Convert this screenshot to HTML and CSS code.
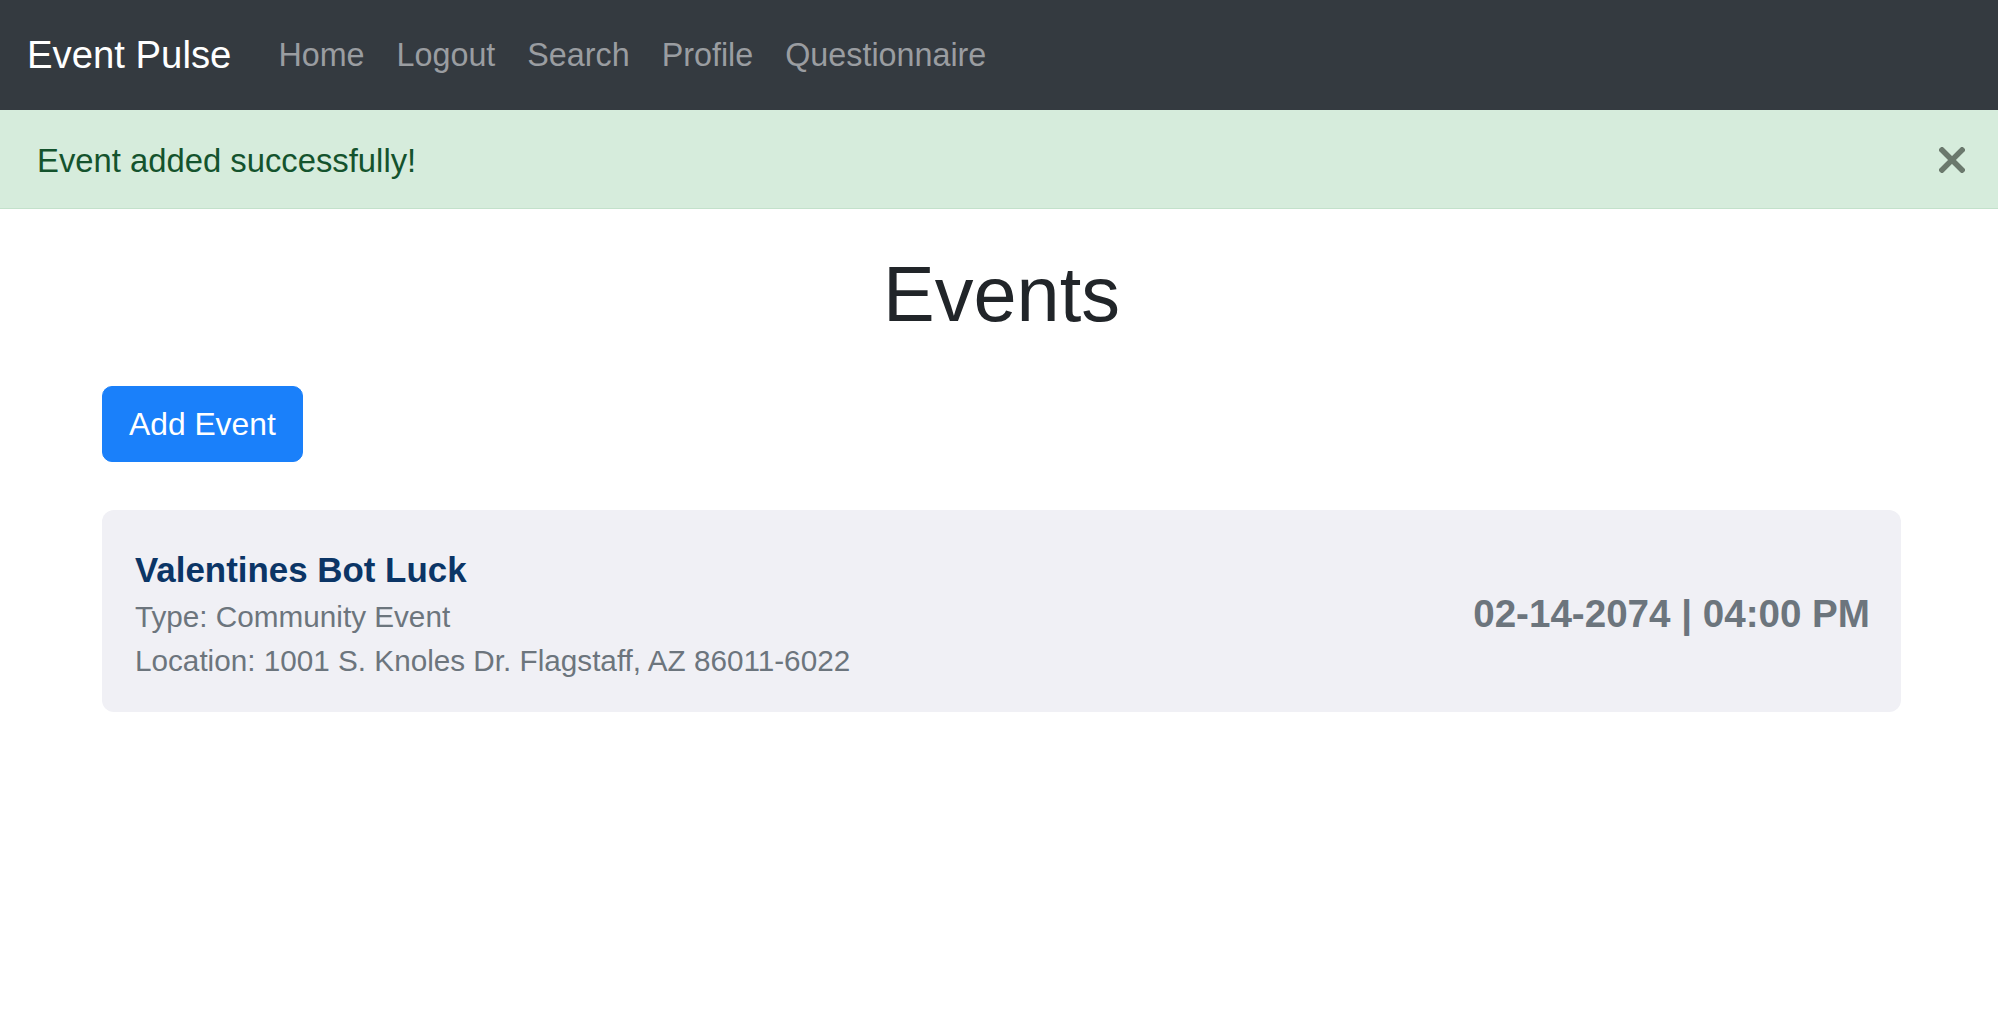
FILE: index.html
```html
<!DOCTYPE html>
<html lang="en">
<head>
<meta charset="utf-8">
<title>Event Pulse</title>
<link rel="stylesheet" href="styles.css">
</head>
<body>
<nav class="navbar">
  <a class="brand" href="#">Event Pulse</a>
  <ul class="nav">
    <li><a class="nav-link" href="#">Home</a></li>
    <li><a class="nav-link" href="#">Logout</a></li>
    <li><a class="nav-link" href="#">Search</a></li>
    <li><a class="nav-link" href="#">Profile</a></li>
    <li><a class="nav-link" href="#">Questionnaire</a></li>
  </ul>
</nav>
<div class="alert">
  <span class="alert-text">Event added successfully!</span>
  <button class="btn-close" aria-label="Close">
    <svg width="26" height="26" viewBox="0 0 26 26"><path d="M3 3L23 23M23 3L3 23" stroke="currentColor" stroke-width="5.5" stroke-linecap="square"/></svg>
  </button>
</div>
<main class="container">
  <h1 class="title">Events</h1>
  <button class="btn-primary">Add Event</button>
  <div class="event-card">
    <div class="event-info">
      <h2 class="event-name">Valentines Bot Luck</h2>
      <p class="event-meta">Type: Community Event</p>
      <p class="event-meta">Location: 1001 S. Knoles Dr. Flagstaff, AZ 86011-6022</p>
    </div>
    <div class="event-date">02-14-2074 | 04:00 PM</div>
  </div>
</main>
</body>
</html>
```
FILE: styles.css
```css
* { box-sizing: border-box; }
body {
  margin: 0;
  font-family: "Liberation Sans", Arial, sans-serif;
  color: #212529;
  background: #fff;
}
.navbar {
  display: flex;
  align-items: center;
  height: 110px;
  padding: 0 27px;
  background: #343a40;
}
.brand {
  font-size: 38.3px;
  color: #fff;
  text-decoration: none;
  margin-right: 31px;
}
.nav {
  display: flex;
  list-style: none;
  margin: 0;
  padding: 0;
}
.nav-link {
  display: block;
  padding: 0 16px;
  font-size: 32.3px;
  color: #9a9da1;
  text-decoration: none;
}
.alert {
  display: flex;
  justify-content: space-between;
  align-items: center;
  padding: 27px 33px 23px 37px;
  line-height: 48px;
  background: #d6ecdc;
  border-bottom: 1px solid #c3e1cb;
}
.alert-text {
  font-size: 32.8px;
  color: #14532d;
}
.btn-close {
  display: flex;
  border: 0;
  padding: 0;
  margin-top: -2px;
  background: transparent;
  color: #6b796d;
}
.container {
  padding: 0 97px 0 102px;
}
.title {
  margin: 40px 0 47px;
  text-align: center;
  font-size: 77.5px;
  font-weight: 400;
  line-height: 90px;
  color: #212529;
}
.btn-primary {
  display: block;
  height: 76px;
  padding: 14px 26px;
  font-family: inherit;
  font-size: 31.8px;
  line-height: 46px;
  color: #fff;
  background: #1a80fa;
  border: 1px solid #1a80fa;
  border-radius: 10px;
}
.event-card {
  display: flex;
  justify-content: space-between;
  align-items: center;
  margin-top: 48px;
  padding: 38px 31px 29px 33px;
  background: #f0f0f5;
  border-radius: 12px;
}
.event-name {
  margin: 0 0 3px;
  font-size: 34.9px;
  font-weight: 700;
  line-height: 44px;
  color: #0b3566;
}
.event-meta {
  margin: 0;
  font-size: 29.7px;
  line-height: 44px;
  color: #6c757d;
}
.event-date {
  margin-top: -3px;
  font-size: 38.6px;
  font-weight: 700;
  color: #6c757d;
}
```
